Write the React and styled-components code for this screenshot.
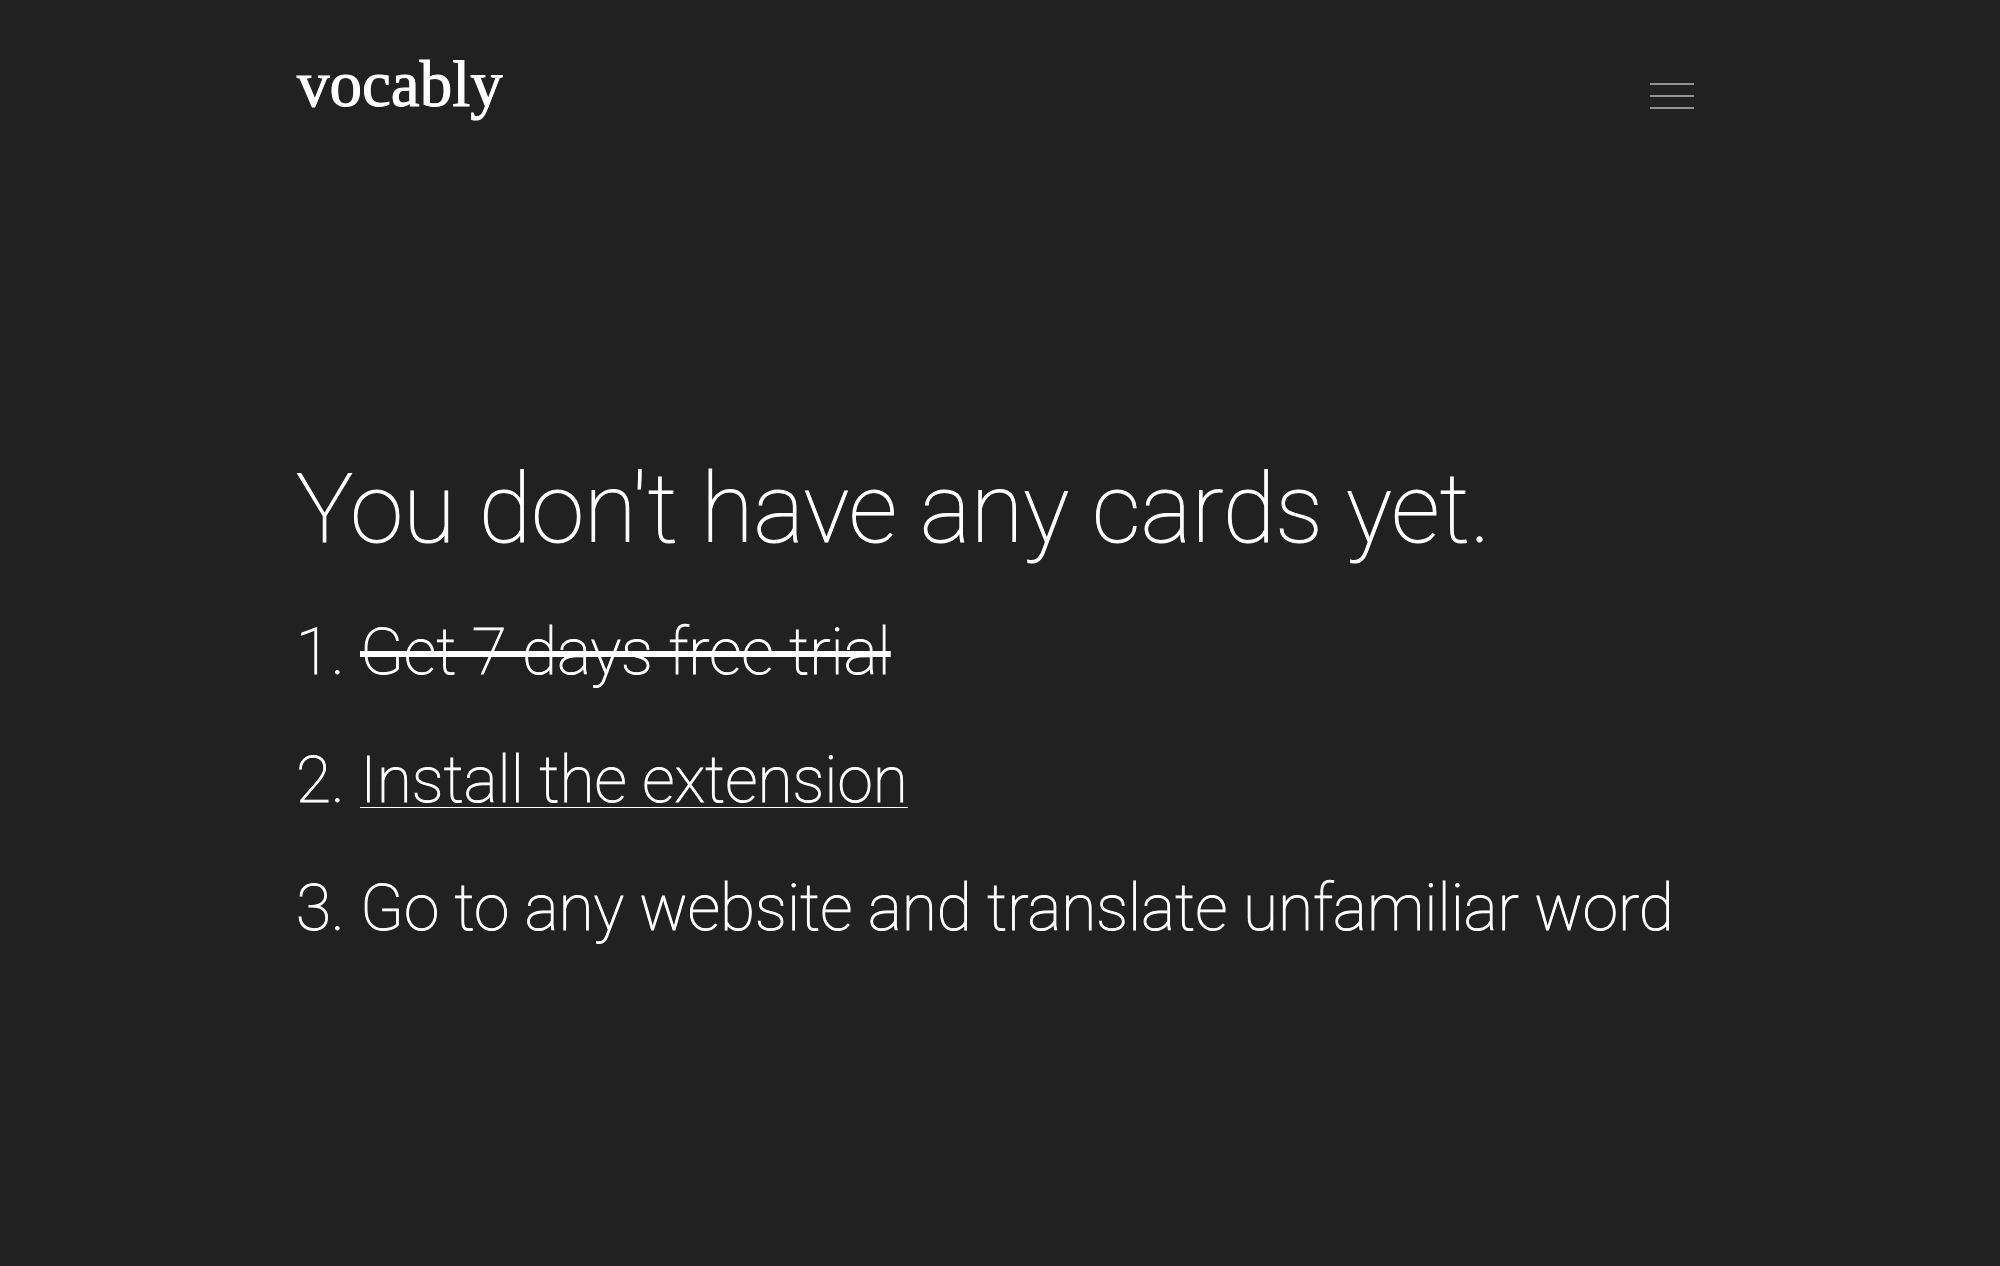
import React from 'react';
import styled, { createGlobalStyle } from 'styled-components';

const Global = createGlobalStyle`
  * { box-sizing: border-box; }
  body { margin: 0; background: #212121; color: #fff; font-family: Roboto, sans-serif; font-weight: 100; }
`;
const Page = styled.div`
  width: 70.4%;
  min-height: 100vh;
  margin: 0 auto;
  display: flex;
  flex-direction: column;
  -webkit-text-stroke: 1px currentColor;
`;
const Header = styled.header`
  display: flex;
  justify-content: space-between;
  align-items: flex-end;
  padding: 44px 10px 0 1px;
`;
const Logo = styled.a`
  color: #fff;
  text-decoration: none;
  font: 400 65px/80px "Liberation Serif", serif;
`;
const MenuButton = styled.button`
  display: flex;
  padding: 14px 0;
  border: 0;
  background: none;
  color: #939393;
  cursor: pointer;
`;
const Main = styled.main`
  padding-top: 325px;
`;
const Title = styled.h1`
  margin: 0;
  font-size: 96px;
  line-height: 120px;
  font-weight: 100;
`;
const Steps = styled.ol`
  margin: 44px 0 0;
  padding: 0;
  display: grid;
  gap: 48px;
  list-style: none;
  counter-reset: step;
  font-size: 64px;
  line-height: 80px;
`;
const Step = styled.li`
  display: flex;
  counter-increment: step;
  &::before { content: counter(step) "."; width: 64px; }
`;
const Done = styled.s`
  text-decoration-thickness: 6px;
`;
const StepLink = styled.a`
  color: inherit;
  text-decoration-thickness: 1px;
  text-underline-offset: 5px;
  text-decoration-skip-ink: none;
`;

export default function App() {
  return (
    <Page>
      <Global />
      <Header>
        <Logo href="#">vocably</Logo>
        <MenuButton type="button" aria-label="Open menu">
          <svg width="44" height="28" fill="none" stroke="currentColor" strokeWidth="2">
            <path d="M0 2h44M0 14h44M0 26h44" />
          </svg>
        </MenuButton>
      </Header>
      <Main>
        <Title>You don't have any cards yet.</Title>
        <Steps>
          <Step><Done>Get 7 days free trial</Done></Step>
          <Step><StepLink href="#">Install the extension</StepLink></Step>
          <Step>Go to any website and translate unfamiliar word</Step>
        </Steps>
      </Main>
    </Page>
  );
}
